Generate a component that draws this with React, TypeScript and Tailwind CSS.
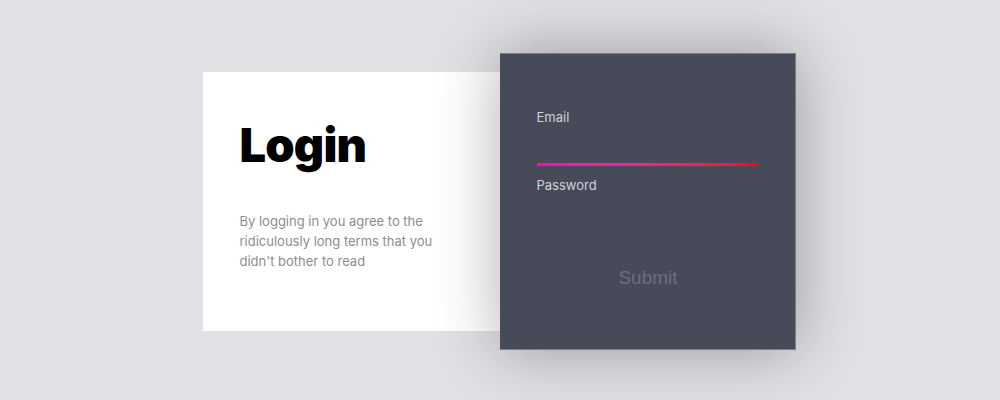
import React from 'react';

const font = { fontFamily: 'Inter, "Noto Sans", sans-serif' };

const LoginCard: React.FC = () => (
  <div className="w-[297px] h-[259px] bg-white pl-[37px] pt-[49px]">
    <h1 className="text-[47px] leading-[48px] font-black text-black tracking-[-0.8px]">Login</h1>
    <p className="mt-[42px] w-[205px] text-[13px] leading-[20px] text-[#8d8d8d]">
      By logging in you agree to the ridiculously long terms that you didn't bother to read
    </p>
  </div>
);

const FormCard: React.FC = () => (
  <form
    className="relative z-10 w-[296px] h-[297px] bg-[#474a59] border border-[#7c7f8a] border-l-0 shadow-[0_0_60px_rgba(0,0,0,0.32)] px-[37px] pt-[53px] flex flex-col"
    onSubmit={(e) => e.preventDefault()}
  >
    <label className="text-[13px] leading-[20px] text-[#d2d2d8]">Email</label>
    <input type="email" className="h-[36px] bg-transparent outline-none text-white text-sm" />
    <div className="h-[3px] bg-gradient-to-r from-[#ff00cc] to-[#ff0022]" />

    <label className="mt-[9px] text-[13px] leading-[20px] text-[#d2d2d8]">Password</label>
    <input type="password" className="h-[35px] bg-transparent outline-none text-white text-sm" />
    <div className="h-[3px]" />

    <button
      type="submit"
      className="mt-[31px] ml-[2px] self-center text-[19px] leading-[28px] text-[#6c6f7c]"
      style={{ fontFamily: '"Liberation Sans", Arial, sans-serif' }}
    >
      Submit
    </button>
  </form>
);

export default function App() {
  return (
    <div className="w-full h-[400px] bg-[#e1e1e5] flex items-center justify-center overflow-hidden" style={font}>
      <div className="flex items-center mt-[2px] mr-[2px]">
        <LoginCard />
        <FormCard />
      </div>
    </div>
  );
}
